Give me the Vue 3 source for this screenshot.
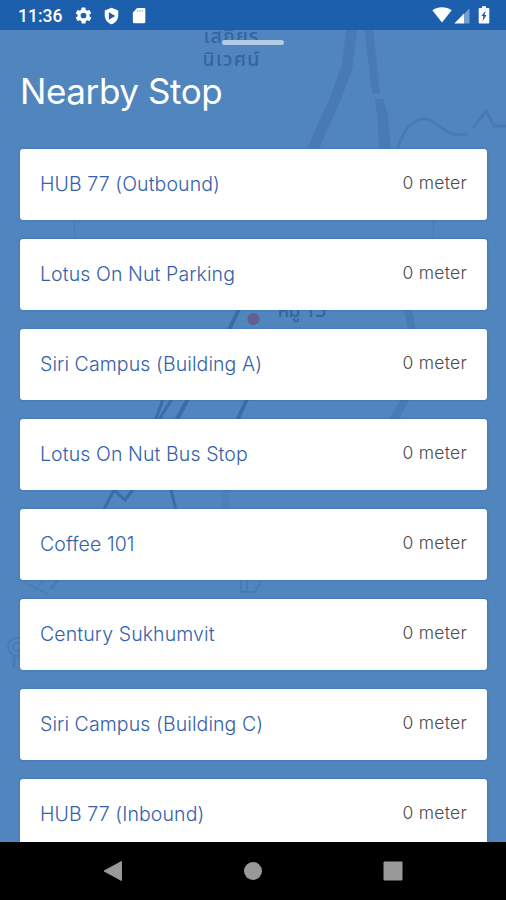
<template>
  <div class="screen">
    <header class="status-bar">
      <span class="clock">11:36</span>
      <svg class="icon-gear" viewBox="0 0 24 24">
        <path fill="#fff" fill-rule="evenodd" d="M19.4 13a7.5 7.5 0 0 0 0-2l2.1-1.6a.5.5 0 0 0 .1-.7l-2-3.4a.5.5 0 0 0-.6-.2l-2.5 1a7.7 7.7 0 0 0-1.7-1L14.5 2.4A.5.5 0 0 0 14 2h-4a.5.5 0 0 0-.5.4L9.1 5.1a7.7 7.7 0 0 0-1.7 1l-2.5-1a.5.5 0 0 0-.6.2l-2 3.4a.5.5 0 0 0 .1.7L4.6 11a7.5 7.5 0 0 0 0 2l-2.1 1.6a.5.5 0 0 0-.1.7l2 3.4c.1.2.4.3.6.2l2.5-1a7.7 7.7 0 0 0 1.7 1l.4 2.7c0 .2.2.4.5.4h4c.2 0 .5-.2.5-.4l.4-2.7a7.7 7.7 0 0 0 1.7-1l2.5 1c.2.1.5 0 .6-.2l2-3.4a.5.5 0 0 0-.1-.7zM12 15.6a3.6 3.6 0 1 1 0-7.200 3.600 3.600 0 0 1 0 7.200z" />
      </svg>
      <svg class="icon-shield" viewBox="0 0 24 24">
        <path fill="#fff" d="M12 1L3 4.8V11c0 5.6 3.8 10.7 9 12 5.2-1.300 9-6.400 9-12V4.800z" />
        <path fill="#1b5fad" d="M8.500 7l8.500 5-8.500 5z" />
      </svg>
      <svg class="icon-card" viewBox="0 0 14 18">
        <path fill="#fff" d="M5 1h7.500A1.200 1.200 0 0 1 13.700 2.200V16a1.200 1.200 0 0 1-1.200 1.200H1.700A1.200 1.200 0 0 1 .5 16V5.700z" />
        <path stroke="#1b5fad" stroke-width="1" opacity=".5" d="M5.500 3v2.200M8 3v2.200M10.500 3v2.200" />
      </svg>
      <div class="status-right">
        <svg class="icon-wifi" viewBox="0 0 20 16">
          <path fill="#fff" d="M.3 3.200C3 1.200 6.300.2 10 .2s7 1 9.700 3L10 15.500z" />
        </svg>
        <svg class="icon-signal" viewBox="0 0 16 16">
          <path fill="#fff" opacity=".4" d="M15.500.5v15H10V6z" />
          <path fill="#fff" d="M10 5.500v10H.3z" />
        </svg>
        <svg class="icon-battery" viewBox="0 0 12 18">
          <path fill="#fff" d="M4 .3h4V2h2c.8 0 1.300.5 1.300 1.300v12.900c0 .8-.5 1.300-1.300 1.300H2c-.8 0-1.300-.5-1.300-1.300V3.300C.7 2.500 1.200 2 2 2h2z" />
          <path fill="#1b5fad" d="M7.700 4.500L3.300 10h2.100L4.600 15l4-6H6.500z" />
        </svg>
      </div>
    </header>

    <main class="sheet">
      <svg class="map" viewBox="0 30 506 812" fill="none">
        <path fill="#487bb3" d="M364 28h9l7 65h-8zM375 99h8l5 16 3 38h-12l-1-30z" />
        <g stroke="#487bb3">
          <path stroke-width="11" d="M352 28L347 67 335 100 322 128 312 152" />
          <path stroke-width="3" d="M397 150C404 128 414 119 424 119C439 119 443 139 468 134M473 128L486 111 494 126H508" />
          <path stroke-width="8" d="M406 306Q411 318 412 334M406 398L393 421" />
          <path stroke-width="7" d="M228 487Q222 500 228 512" opacity=".5" />
          <path stroke-width="1" d="M74.500 215V243M433.500 215V243" />
          <path stroke-width="2" d="M241 576V592H255L263 578M247 580V590" />
          <path stroke-width="1.500" d="M24 582L48 594M33 592L46 578" opacity=".7" />
          <path stroke-width="3" d="M51 589Q54 583 61 578" />
          <circle cx="17" cy="647" r="9" stroke-width="2" />
          <circle cx="17" cy="647" r="4" stroke-width="2" />
          <path stroke-width="3" d="M14 656V668" />
        </g>
        <g stroke="#3b6ca6">
          <path stroke-width="4" d="M239 309L229 330M188 399L176 421M247 399L237 421" />
          <path stroke-width="3" d="M163 399L155 421M172 399L158 421" />
          <path stroke-width="3" d="M103 511L114 490 125 500 134 488M171 490L176 510" />
        </g>
        <circle cx="253.500" cy="319" r="6" fill="#625f91" />
        <g class="map-label">
          <text x="231" y="43" text-anchor="middle" textLength="55">เสถียร</text>
          <text x="231" y="66" text-anchor="middle" textLength="57">นิเวศน์</text>
          <text x="302" y="317" text-anchor="middle" textLength="49">หมู่ 13</text>
        </g>
      </svg>
      <div class="handle"></div>
      <h1>Nearby Stop</h1>
      <ul class="stops">
        <li v-for="stop in stops" :key="stop.name" class="stop">
          <span class="name">{{ stop.name }}</span>
          <span class="distance">{{ stop.distance }} meter</span>
        </li>
      </ul>
    </main>

    <nav class="nav-bar">
      <svg viewBox="0 0 20 22"><path d="M18.500 1.500v19L1 11z" fill="#999" stroke="#999" stroke-linejoin="round" /></svg>
      <svg viewBox="0 0 20 22"><circle cx="10" cy="11" r="9" fill="#999" /></svg>
      <svg viewBox="0 0 20 22"><rect x=".5" y="1.500" width="19" height="19" rx="1" fill="#999" /></svg>
    </nav>
  </div>
</template>

<script setup>
const stops = [
  { name: 'HUB 77 (Outbound)', distance: 0 },
  { name: 'Lotus On Nut Parking', distance: 0 },
  { name: 'Siri Campus (Building A)', distance: 0 },
  { name: 'Lotus On Nut Bus Stop', distance: 0 },
  { name: 'Coffee 101', distance: 0 },
  { name: 'Century Sukhumvit', distance: 0 },
  { name: 'Siri Campus (Building C)', distance: 0 },
  { name: 'HUB 77 (Inbound)', distance: 0 }
]
</script>

<style>
body {
  margin: 0;
  background: #000;
}
</style>

<style scoped>
.screen {
  display: flex;
  flex-direction: column;
  width: 506px;
  height: 900px;
  overflow: hidden;
  font-family: Inter, "Liberation Sans", sans-serif;
}

.status-bar {
  display: flex;
  align-items: center;
  flex: 0 0 30px;
  box-sizing: border-box;
  padding: 1px 16px 0 18px;
  background: #1b5fad;
}

.clock {
  width: 44px;
  font-family: Roboto, sans-serif;
  font-size: 17.5px;
  font-weight: 500;
  color: #fff;
}

.icon-gear {
  width: 19px;
  height: 19px;
  margin-left: 12px;
}

.icon-shield {
  width: 19px;
  height: 18px;
  margin-left: 9px;
}

.icon-card {
  width: 14px;
  height: 17px;
  margin-left: 11px;
}

.status-right {
  display: flex;
  align-items: center;
  margin-left: auto;
}

.icon-wifi {
  width: 20px;
  height: 16px;
  margin-top: -1px;
}

.icon-signal {
  width: 16px;
  height: 16px;
  margin: 0 8px 0 2px;
}

.icon-battery {
  width: 12px;
  height: 18px;
  margin-top: -1px;
}

.sheet {
  position: relative;
  flex: 0 0 812px;
  overflow: hidden;
  background: #5185be;
}

.map {
  position: absolute;
  inset: 0;
  width: 506px;
  height: 812px;
}

.map-label {
  fill: #3565a0;
  font-family: "Noto Sans Thai", "Noto Sans", sans-serif;
  font-size: 19.5px;
  font-weight: 500;
}

.handle {
  position: relative;
  width: 62px;
  height: 5px;
  margin: 10px auto 0;
  border-radius: 3px;
  background: #b3cbe4;
}

h1 {
  position: relative;
  margin: 24px 0 0 20px;
  font-size: 35px;
  font-weight: 400;
  line-height: 44px;
  letter-spacing: -0.4px;
  color: #fff;
}

.stops {
  position: relative;
  display: flex;
  flex-direction: column;
  gap: 19px;
  margin: 36px 19px 0 20px;
  padding: 0;
  list-style: none;
}

.stop {
  display: flex;
  justify-content: space-between;
  align-items: center;
  box-sizing: border-box;
  height: 71px;
  padding: 0 20px;
  border-radius: 3px;
  background: #fff;
  box-shadow: 0 0 2px #2468b0;
}

.name {
  padding-bottom: 2px;
  font-size: 19.5px;
  font-weight: 300;
  letter-spacing: 0.1px;
  color: #3461ab;
  white-space: nowrap;
}

.distance {
  padding-bottom: 5px;
  font-size: 17.5px;
  font-weight: 300;
  letter-spacing: 0.25px;
  color: #4c4c4c;
}

.nav-bar {
  display: flex;
  justify-content: space-between;
  align-items: center;
  flex: 1;
  box-sizing: border-box;
  padding: 0 103px;
  background: #000;
}

.nav-bar svg {
  width: 20px;
  height: 22px;
}
</style>
